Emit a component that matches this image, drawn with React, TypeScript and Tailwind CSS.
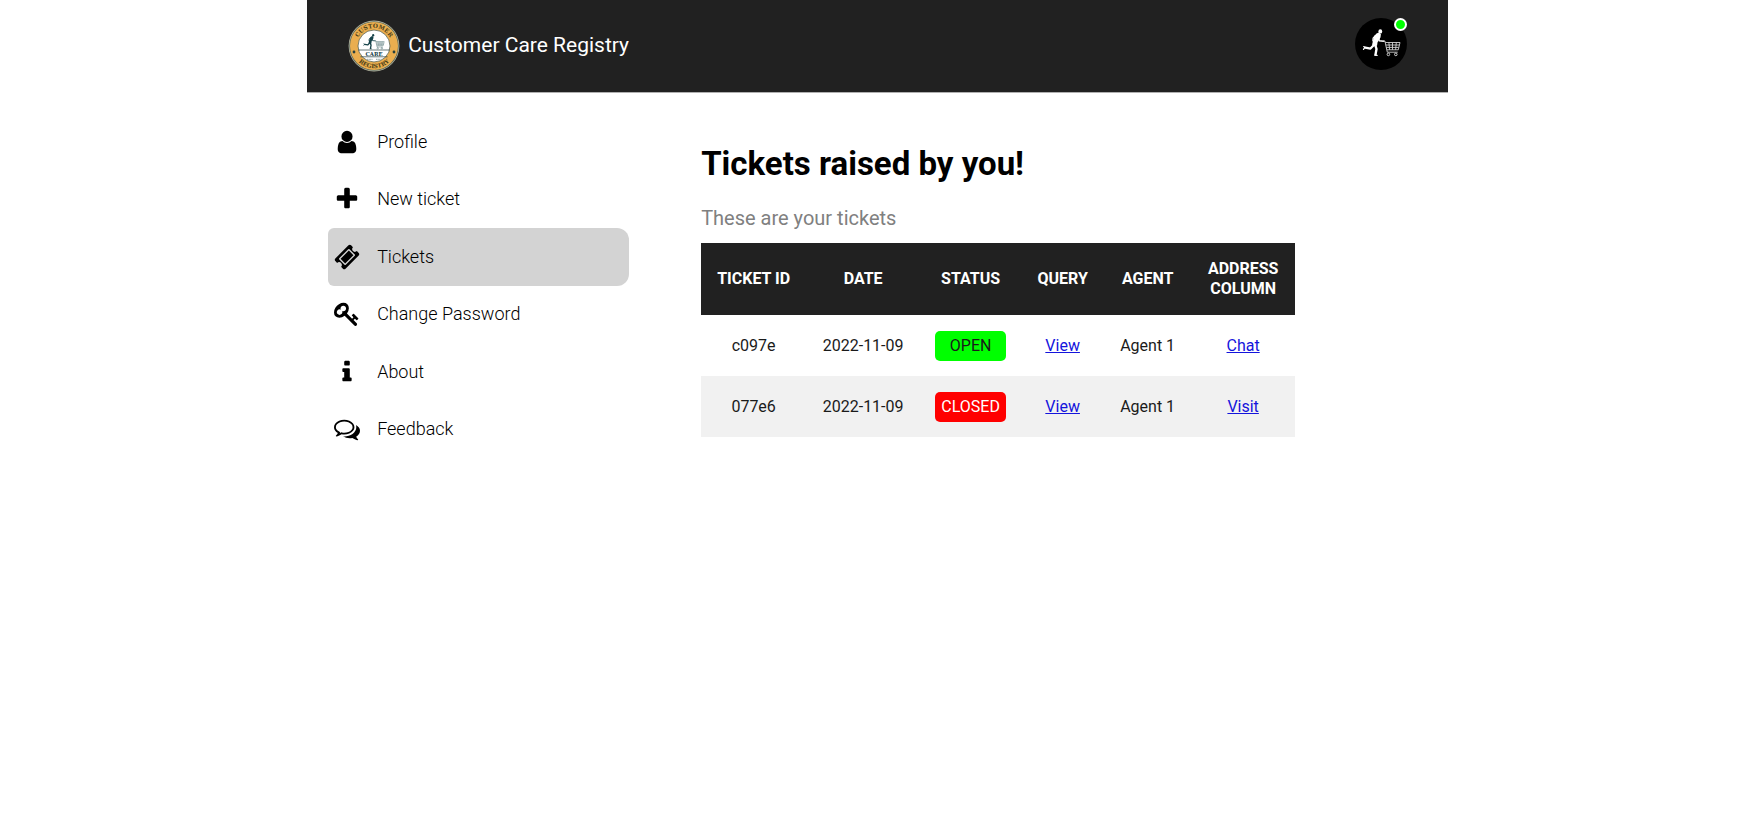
const navItems = [
  {
    label: "Profile",
    path: "M1536 1399q0 109-62.5 187t-150.5 78h-854q-88 0-150.5-78t-62.5-187q0-85 8.5-160.5t31.5-152 58.5-131 94-89 134.5-34.5q131 128 313 128t313-128q76 0 134.5 34.5t94 89 58.5 131 31.5 152 8.5 160.5zm-256-887q0 159-112.5 271.5t-271.5 112.5-271.5-112.5-112.5-271.5 112.5-271.5 271.5-112.5 271.5 112.5 112.5 271.5z",
  },
  {
    label: "New ticket",
    path: "M1600 736v192q0 40-28 68t-68 28h-416v416q0 40-28 68t-68 28h-192q-40 0-68-28t-28-68v-416h-416q-40 0-68-28t-28-68v-192q0-40 28-68t68-28h416v-416q0-40 28-68t68-28h192q40 0 68 28t28 68v416h416q40 0 68 28t28 68z",
  },
  {
    label: "Tickets",
    active: true,
    path: "M1024 452l316 316-572 572-316-316zm-211 979l618-618q19-19 19-45t-19-45l-362-362q-18-18-45-18t-45 18l-618 618q-19 19-19 45t19 45l362 362q18 18 45 18t45-18zm889-637l-907 908q-37 37-90.5 37t-90.5-37l-126-126q56-56 56-136t-56-136-136-56-136 56l-125-126q-37-37-37-90.5t37-90.5l907-906q37-37 90.5-37t90.5 37l125 125q-56 56-56 136t56 136 136 56 136-56l126 125q37 37 37 90.5t-37 90.5z",
  },
  {
    label: "Change Password",
    path: "M832 512q0-80-56-136t-136-56-136 56-56 136q0 42 19 83-41-19-83-19-80 0-136 56t-56 136 56 136 136 56 136-56 56-136q0-42-19-83 41 19 83 19 80 0 136-56t56-136zm851 704q0 17-49 66t-66 49q-9 0-28.5-16t-36.5-33-38.5-40-24.5-26l-96 96 220 220q28 28 28 68 0 42-39 81t-81 39q-40 0-68-28l-671-671q-176 131-365 131-163 0-265.5-102.5t-102.5-265.5q0-160 95-313t248-248 313-95q163 0 265.5 102.5t102.5 265.5q0 189-131 365l355 355 96-96q-3-3-26-24.5t-40-38.5-33-36.5-16-28.5q0-17 49-66t66-49q13 0 23 10 6 6 46 44.5t82 79.5 86.5 86 73 78 28.5 41z",
  },
  {
    label: "About",
    path: "M1216 1344v128q0 26-19 45t-45 19h-512q-26 0-45-19t-19-45v-128q0-26 19-45t45-19h64v-384h-64q-26 0-45-19t-19-45v-128q0-26 19-45t45-19h384q26 0 45 19t19 45v576h64q26 0 45 19t19 45zm-128-1152v192q0 26-19 45t-45 19h-256q-26 0-45-19t-19-45v-192q0-26 19-45t45-19h256q26 0 45 19t19 45z",
  },
  {
    label: "Feedback",
    path: "M704 384q-153 0-286 52t-211.5 141-78.5 191q0 82 53 158t149 132l97 56-35 84q34-20 62-39l44-31 53 10q78 14 153 14 153 0 286-52t211.5-141 78.5-191-78.5-191-211.5-141-286-52zm0-128q191 0 353.5 68.5t256.5 186.5 94 257-94 257-256.5 186.5-353.5 68.5q-86 0-176-16-124 88-278 128-36 9-86 16h-3q-11 0-20.5-8t-11.5-21q-1-3-1-6.5t.5-6.5 2-6l2.5-5 3.5-5.5 4-5 4.5-5 4-4.5q5-6 23-25t26-29.5 22.5-29 25-38.5 20.5-44q-124-72-195-177t-71-224q0-139 94-257t256.5-186.5 353.5-68.5zm822 1169q10 24 20.5 44t25 38.5 22.5 29 26 29.5 23 25q1 1 4 4.5t4.5 5 4 5 3.5 5.5l2.5 5 2 6 .5 6.5-1 6.5q-3 14-13 22t-22 7q-50-7-86-16-154-40-278-128-90 16-176 16-271 0-472-132 58 4 88 4 161 0 309-45t264-129q125-92 192-212t67-254q0-77-23-152 129 71 204 178t75 230q0 120-71 224.5t-195 176.5z",
  },
];

const tickets = [
  { id: "c097e", date: "2022-11-09", status: "OPEN", agent: "Agent 1", action: "Chat" },
  { id: "077e6", date: "2022-11-09", status: "CLOSED", agent: "Agent 1", action: "Visit" },
];

const columns = [
  { name: "TICKET ID", width: "w-[105px] whitespace-nowrap" },
  { name: "DATE", width: "w-[114px]" },
  { name: "STATUS", width: "w-[101px]" },
  { name: "QUERY", width: "w-[83px]" },
  { name: "AGENT", width: "w-[87px]" },
  { name: "ADDRESS COLUMN", width: "w-[104px]" },
];

/* Runner pushing a shopping cart, drawn on a 38 x 27 field. */
function Runner({ cart }: { cart: string }) {
  return (
    <>
      <ellipse cx="17.8" cy="2.4" rx="1.9" ry="2.2" fill="currentColor" />
      <path
        fill="currentColor"
        d="M16.4 3.6l2 1.6-.4 3.2-1.2 1.6-1.8 3.6-.4 3-3.6.8-1.4-1.8 1.2-5 1-3.6 2.2-2.4z"
      />
      <g fill="none" stroke="currentColor" strokeLinecap="round" strokeLinejoin="round">
        <path d="M16.4 7.6l.2 4.2 4.8.4" strokeWidth="1.5" />
        <path d="M12.8 6.6l-2.2 2.6-.2 2.6" strokeWidth="1.3" />
        <path d="M12.8 16.2l1.2 3.8-1 5.6" strokeWidth="2.4" />
        <path d="M12.4 26.2l2.2.2" strokeWidth="1.3" />
        <path d="M11.4 16l-3.4 3.6-5.2-.9" strokeWidth="2.2" />
        <path d="M2.4 18.4l-1.4 2M1.2 17.6l1.6 1" strokeWidth="1.2" />
      </g>
      <path
        fill="none"
        stroke={cart}
        strokeWidth="0.9"
        d="M20.6 12h1.8l2.4 11.2h10.4M22.7 13.5h14.8l-1.7 7.3H24.3M23.2 16h13.6M23.7 18.4h12.6M26.4 13.5l.7 7.3M30 13.5v7.3M33.8 13.5l-.7 7.3"
      />
      <circle cx="25.9" cy="25.4" r="1.3" fill="none" stroke={cart} strokeWidth="1" />
      <circle cx="33.3" cy="25.4" r="1.3" fill="none" stroke={cart} strokeWidth="1" />
    </>
  );
}

function Logo() {
  return (
    <svg viewBox="0 0 52 52" className="size-[52px] shrink-0" role="img" aria-label="Customer Care Registry logo">
      <defs>
        <path id="arc-top" d="M8 26a18 18 0 0 1 36 0" />
        <path id="arc-bottom" d="M3.8 26a22.2 22.2 0 0 0 44.4 0" />
      </defs>
      <circle cx="26" cy="26" r="25.4" fill="#b3b29c" />
      <circle cx="26" cy="26" r="24.6" fill="#4d6258" />
      <circle cx="26" cy="26" r="24" fill="#eaae4f" />
      <circle cx="26" cy="26" r="16" fill="#fff" stroke="#5c6350" strokeWidth="0.8" />
      <g fill="#4a3d16" fontFamily="DejaVu Serif, serif" fontWeight="700" fontSize="5.8" textAnchor="middle">
        <text>
          <textPath href="#arc-top" startOffset="50%">CUSTOMER</textPath>
        </text>
        <text>
          <textPath href="#arc-bottom" startOffset="50%">REGISTRY</textPath>
        </text>
      </g>
      <circle cx="6" cy="32" r="1.4" fill="#26413f" />
      <circle cx="46" cy="32" r="1.4" fill="#26413f" />
      <g transform="translate(15.2 14) scale(.56)" color="#17434a">
        <Runner cart="#57797b" />
      </g>
      <path d="M10.2 30h31.6M12.4 36.8h27.2" stroke="#26413f" strokeWidth="0.7" />
      <text x="26" y="35.6" fill="#17434a" fontFamily="DejaVu Serif, serif" fontWeight="700" fontSize="5.4" textAnchor="middle">
        CARE
      </text>
      <path d="M19 39.3h5.5M28 39.3h5.5" stroke="#8fa19c" strokeWidth="1" strokeDasharray="1.2 .4" />
    </svg>
  );
}

function Avatar() {
  return (
    <button type="button" aria-label="Your account" className="relative mb-1 size-[52px] rounded-full bg-black text-white">
      <svg viewBox="0 0 52 52" className="size-full">
        <g transform="translate(7.5 11)">
          <Runner cart="#d0d0d0" />
        </g>
      </svg>
      <span className="absolute top-0 right-0 size-[13px] rounded-full border-2 border-white bg-[#00ff00]" />
    </button>
  );
}

export default function App() {
  return (
    <div className="mx-auto w-[65%] font-['Roboto',sans-serif] text-black">
      <header className="flex h-[93px] items-center justify-between border-b border-[#b0b0b0] bg-[#212121] px-[41px]">
        <a href="#home" className="flex items-center gap-2 text-[21px] text-white">
          <Logo />
          <span>Customer Care Registry</span>
        </a>
        <Avatar />
      </header>

      <div className="flex items-start gap-[72px] pt-5 pl-[21px]">
        <nav aria-label="Main" className="grid h-[345px] w-[301px] shrink-0 auto-rows-fr">
          {navItems.map((item) => (
            <a
              key={item.label}
              href="#section"
              aria-current={item.active ? "page" : undefined}
              className={
                "flex items-center gap-[17px] rounded-l-md rounded-r-xl pl-[6px] text-lg font-light " +
                (item.active ? "bg-[#d3d3d3]" : "")
              }
            >
              <svg viewBox="0 0 1792 1792" className="size-[26px]" fill="currentColor" aria-hidden="true">
                <path d={item.path} />
              </svg>
              {item.label}
            </a>
          ))}
        </nav>

        <main className="pt-[29px]">
          <h1 className="text-[33px] leading-[44px] font-bold">Tickets raised by you!</h1>
          <p className="mt-5 text-[20px] leading-6 text-[#808080]">These are your tickets</p>
          <table className="mt-[13px] w-[594px] table-fixed border-collapse text-center text-base leading-5">
            <thead className="bg-[#212121] text-white">
              <tr className="h-[72px]">
                {columns.map((column) => (
                  <th key={column.name} scope="col" className={"px-[15px] font-bold " + column.width}>
                    {column.name}
                  </th>
                ))}
              </tr>
            </thead>
            <tbody className="text-[#1a1a1a]">
              {tickets.map((ticket) => (
                <tr key={ticket.id} className="h-[61px] even:bg-[#f1f1f1]">
                  <td className="px-[15px]">{ticket.id}</td>
                  <td className="px-[15px] whitespace-nowrap">{ticket.date}</td>
                  <td className="px-[15px]">
                    <span
                      className={
                        "block rounded-[5px] py-[5px] " +
                        (ticket.status === "OPEN" ? "bg-[#00ff00]" : "bg-[#ff0000] text-white")
                      }
                    >
                      {ticket.status}
                    </span>
                  </td>
                  <td className="px-[15px]">
                    <a href="#query" className="text-[#1414dc] underline">View</a>
                  </td>
                  <td className="px-[15px] whitespace-nowrap">{ticket.agent}</td>
                  <td className="px-[15px]">
                    <a href="#address" className="text-[#1414dc] underline">{ticket.action}</a>
                  </td>
                </tr>
              ))}
            </tbody>
          </table>
        </main>
      </div>
    </div>
  );
}
